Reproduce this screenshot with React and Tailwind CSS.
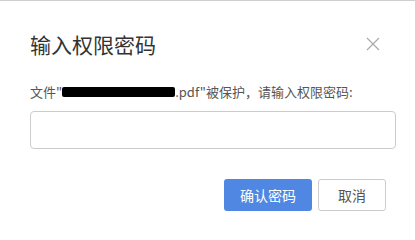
const App = () => {
  return (
    <div
      className="w-[415px] h-[240px] bg-white border-t border-[#cfcfcf] overflow-hidden"
      style={{ fontFamily: '"Noto Sans CJK SC", "Microsoft YaHei", sans-serif' }}
    >
      <div className="pt-[29px] pl-[30px] pr-[29px]">

        <div className="flex items-center justify-between h-[28px] pr-[6px]">
          <h1 className="text-[21px] leading-[28px] text-[#333]">输入权限密码</h1>
          <button className="w-[14px] h-[14px] text-[#aaa]">
            <svg viewBox="0 0 14 14" width="14" height="14" fill="none" stroke="currentColor" strokeWidth="1.2">
              <path d="M1 1 L13 13 M13 1 L1 13" />
            </svg>
          </button>
        </div>

        <p className="mt-[24px] h-[20px] text-[13px] leading-[20px] text-[#555] whitespace-nowrap">
          文件"
          <span className="inline-block align-middle w-[113px] h-[10px] bg-black rounded-[2px] -mt-[2px]"></span>
          .pdf"被保护，请输入权限密码:
        </p>

        <input
          type="password"
          autoFocus
          className="mt-[9px] block w-[366px] h-[38px] border border-[#ccc] rounded-[4px] px-[3px] outline-none caret-[#555]"
        />

        <div className="mt-[30px] flex justify-end gap-[6px]">
          <button className="w-[88px] h-[32px] rounded-[3px] bg-[#4f87e3] text-white text-[14px]">
            确认密码
          </button>
          <button className="w-[68px] h-[32px] rounded-[3px] border border-[#ccc] bg-white text-[#555] text-[14px]">
            取消
          </button>
        </div>

      </div>
    </div>
  )
}

export default App
